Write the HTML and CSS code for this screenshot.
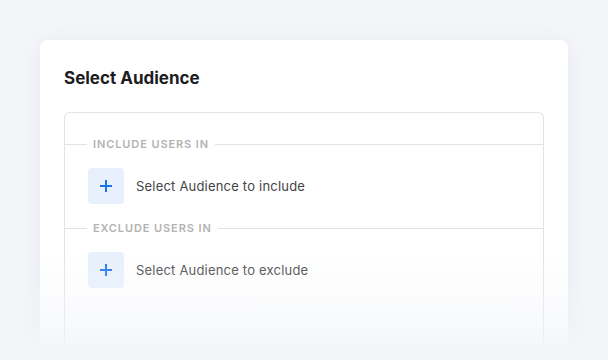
FILE: index.html
```html
<!DOCTYPE html>
<html>
<head>
<meta charset="utf-8">
<link rel="stylesheet" href="styles.css">
</head>
<body>
<div class="page">
  <div class="card">
    <h1 class="title">Select Audience</h1>
    <div class="box">
      <div class="section">
        <div class="divider"><span class="line-start"></span><span class="label">INCLUDE USERS IN</span><span class="line-end"></span></div>
        <div class="row">
          <button class="add"><svg width="14" height="14" viewBox="0 0 14 14"><path d="M7 1v12M1 7h12" stroke="#1a73e8" stroke-width="2" fill="none"/></svg></button>
          <span class="row-text">Select Audience to include</span>
        </div>
      </div>
      <div class="section">
        <div class="divider"><span class="line-start"></span><span class="label">EXCLUDE USERS IN</span><span class="line-end"></span></div>
        <div class="row">
          <button class="add"><svg width="14" height="14" viewBox="0 0 14 14"><path d="M7 1v12M1 7h12" stroke="#1a73e8" stroke-width="2" fill="none"/></svg></button>
          <span class="row-text">Select Audience to exclude</span>
        </div>
      </div>
    </div>
  </div>
  <div class="fade"></div>
</div>
</body>
</html>
```
FILE: styles.css
```css
* { box-sizing: border-box; }
html, body { margin: 0; padding: 0; }
body {
  background: #f3f5f8;
  font-family: "Inter", "Noto Sans", sans-serif;
  width: 608px;
  height: 360px;
  overflow: hidden;
}
.page {
  position: relative;
  height: 360px;
  overflow: hidden;
  padding: 40px 40px 0 40px;
}
.card {
  background: #fff;
  border-radius: 8px 8px 0 0;
  height: 320px;
  padding: 26px 24px 0 24px;
  box-shadow: 0 4px 24px rgba(30, 50, 90, 0.06);
}
.title {
  margin: 0;
  font-size: 17px;
  font-weight: 700;
  color: #1d1d1f;
  line-height: 24px;
  letter-spacing: 0;
}
.box {
  margin-top: 22px;
  border: 1px solid #e2e2e2;
  border-bottom: none;
  border-radius: 6px 6px 0 0;
  height: 248px;
  padding-top: 23px;
}
.divider {
  display: flex;
  align-items: center;
  height: 16px;
}
.line-start {
  width: 22px;
  border-top: 1px solid #e2e2e2;
}
.line-end {
  flex: 1;
  border-top: 1px solid #e2e2e2;
}
.label {
  padding: 0 6px;
  font-size: 11px;
  font-weight: 600;
  color: #b3b3b3;
  letter-spacing: 0.9px;
  line-height: 16px;
}
.row {
  display: flex;
  align-items: center;
  padding: 16px 0 16px 23px;
  gap: 12px;
}
.add {
  width: 36px;
  height: 36px;
  border: none;
  border-radius: 4px;
  background: #e7f0fc;
  display: flex;
  align-items: center;
  justify-content: center;
  padding: 0;
}
.row-text {
  font-size: 13px;
  color: #444;
  letter-spacing: 0.2px;
}
.fade {
  position: absolute;
  left: 0;
  right: 0;
  bottom: 0;
  height: 110px;
  background: linear-gradient(to bottom, rgba(243,245,248,0) 0%, rgba(243,245,248,0.55) 70%, rgba(243,245,248,0.9) 86%, rgba(243,245,248,1) 90%);
  pointer-events: none;
}
```
